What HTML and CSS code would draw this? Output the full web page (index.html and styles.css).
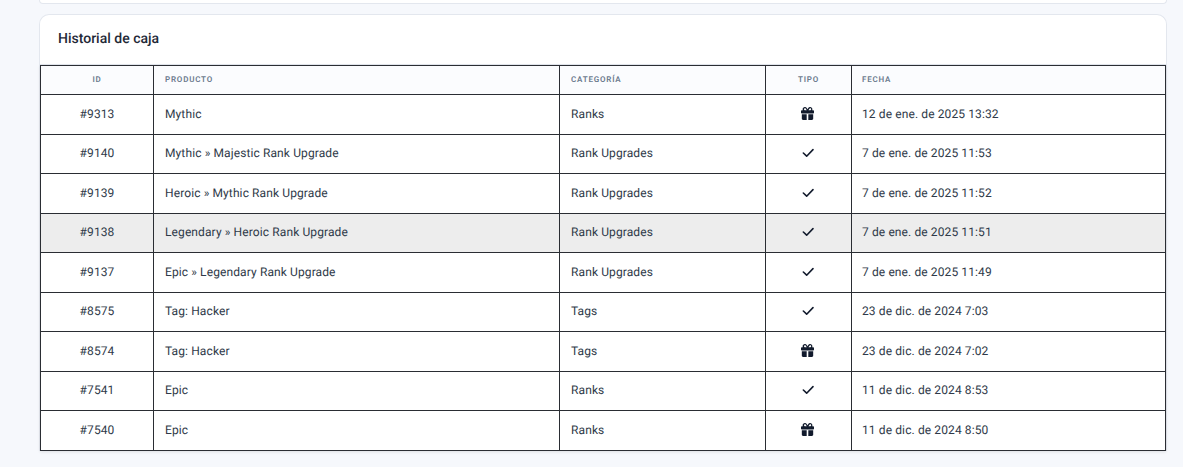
FILE: index.html
```html
<!DOCTYPE html>
<html lang="es">
<head>
<meta charset="utf-8">
<title>Historial de caja</title>
<link rel="stylesheet" href="styles.css">
</head>
<body>
<svg class="sprite" width="0" height="0" aria-hidden="true">
  <symbol id="gift" viewBox="0 0 512 512"><path d="M190.5 68.8 225.3 128H160c-22.1 0-40-17.9-40-40s17.9-40 40-40h2.2c14.9 0 28.8 7.9 36.3 20.8zM64 88c0 14.4 3.5 28 9.6 40H32c-17.7 0-32 14.3-32 32v64c0 17.7 14.3 32 32 32h448c17.7 0 32-14.3 32-32v-64c0-17.7-14.3-32-32-32h-41.600c6.100-12 9.600-25.600 9.600-40 0-48.600-39.400-88-88-88h-2.200c-31.900 0-61.500 16.900-77.700 44.400L256 85.500l-24.100-41C215.700 16.900 186.100 0 154.200 0H152C103.400 0 64 39.400 64 88zm336 0c0 22.100-17.900 40-40 40h-65.300l34.800-59.200C337 55.900 350.900 48 365.800 48h2.200c17.700 0 32 17.900 32 40zM32 288v176c0 26.500 21.500 48 48 48h144V288H32zm256 224h144c26.500 0 48-21.500 48-48V288H288v224z"/></symbol>
  <symbol id="check" viewBox="0 0 24 24"><path d="M5 12 10 16.800 19.500 7" fill="none" stroke="currentColor" stroke-width="2.400" stroke-linecap="round" stroke-linejoin="round"/></symbol>
</svg>
<div class="card card-prev"></div>
<section class="card">
  <h2 class="card-title">Historial de caja</h2>
  <table class="log">
    <thead>
      <tr>
        <th class="c-id center">ID</th>
        <th class="c-prod">Producto</th>
        <th class="c-cat">Categoría</th>
        <th class="c-type center">Tipo</th>
        <th class="c-date">Fecha</th>
      </tr>
    </thead>
    <tbody>
      <tr><td class="center">#9313</td><td>Mythic</td><td>Ranks</td><td class="center"><svg class="ico gift"><use href="#gift"/></svg></td><td class="date">12 de ene. de 2025 13:32</td></tr>
      <tr><td class="center">#9140</td><td>Mythic » Majestic Rank Upgrade</td><td>Rank Upgrades</td><td class="center"><svg class="ico check"><use href="#check"/></svg></td><td class="date">7 de ene. de 2025 11:53</td></tr>
      <tr><td class="center">#9139</td><td>Heroic » Mythic Rank Upgrade</td><td>Rank Upgrades</td><td class="center"><svg class="ico check"><use href="#check"/></svg></td><td class="date">7 de ene. de 2025 11:52</td></tr>
      <tr class="hover"><td class="center">#9138</td><td>Legendary » Heroic Rank Upgrade</td><td>Rank Upgrades</td><td class="center"><svg class="ico check"><use href="#check"/></svg></td><td class="date">7 de ene. de 2025 11:51</td></tr>
      <tr><td class="center">#9137</td><td>Epic » Legendary Rank Upgrade</td><td>Rank Upgrades</td><td class="center"><svg class="ico check"><use href="#check"/></svg></td><td class="date">7 de ene. de 2025 11:49</td></tr>
      <tr><td class="center">#8575</td><td>Tag: Hacker</td><td>Tags</td><td class="center"><svg class="ico check"><use href="#check"/></svg></td><td class="date">23 de dic. de 2024 7:03</td></tr>
      <tr><td class="center">#8574</td><td>Tag: Hacker</td><td>Tags</td><td class="center"><svg class="ico gift"><use href="#gift"/></svg></td><td class="date">23 de dic. de 2024 7:02</td></tr>
      <tr><td class="center">#7541</td><td>Epic</td><td>Ranks</td><td class="center"><svg class="ico check"><use href="#check"/></svg></td><td class="date">11 de dic. de 2024 8:53</td></tr>
      <tr><td class="center">#7540</td><td>Epic</td><td>Ranks</td><td class="center"><svg class="ico gift"><use href="#gift"/></svg></td><td class="date">11 de dic. de 2024 8:50</td></tr>
    </tbody>
  </table>
</section>
</body>
</html>
```
FILE: styles.css
```css
* { box-sizing: border-box; }
html, body { margin: 0; height: 467px; overflow: hidden; }
body {
  padding: 0 16px 0 39px;
  background: #f6f8fc;
  font-family: Roboto, "Liberation Sans", sans-serif;
  color: #1f2937;
  text-rendering: geometricPrecision;
  -webkit-font-smoothing: antialiased;
}
.sprite { position: absolute; }
.card {
  background: #fff;
  border: 1px solid #e3e7ee;
  border-bottom: 0;
  border-radius: 10px 10px 0 0;
}
.card-prev {
  height: 4px;
  margin-bottom: 10px;
  border: 1px solid #e3e7ee;
  border-top: 0;
  border-radius: 0 0 8px 8px;
}
.card-title {
  margin: 0;
  height: 50px;
  padding: 15px 18px 0;
  font-size: 14px;
  line-height: 18px;
  font-weight: 500;
  color: #1f2937;
  border-bottom: 1px solid #e3e7ee;
}
.log {
  width: 1125px;
  border-collapse: collapse;
  table-layout: fixed;
  font-size: 12px;
  letter-spacing: .11px;
  box-shadow: 0 1px 3px rgba(0, 0, 0, .1);
}
.log th, .log td {
  border: 1px solid #2a2d33;
  padding: 0 11px;
  text-align: left;
}
.log th {
  height: 29px;
  padding-bottom: 2px;
  background: #fbfcfe;
  font-size: 8px;
  font-weight: 600;
  letter-spacing: .8px;
  text-transform: uppercase;
  color: #6b7a8d;
}
.log td {
  height: 39.5px;
  padding-bottom: 1px;
  background: #fff;
  color: #2f3a49;
}
.log .center { text-align: center; }
.log .hover td { background: #ededed; }
.log .c-date, .log .date { padding-left: 10px; }
.c-id { width: 113px; }
.c-prod { width: 406px; }
.c-cat { width: 206px; }
.c-type { width: 86px; }
.c-date { width: 314px; }
.ico { display: block; margin: 0 auto; color: #111a2c; fill: #111a2c; transform: translateX(-1px); }
.gift { width: 13px; height: 13px; }
.check { width: 16px; height: 16px; }
```
